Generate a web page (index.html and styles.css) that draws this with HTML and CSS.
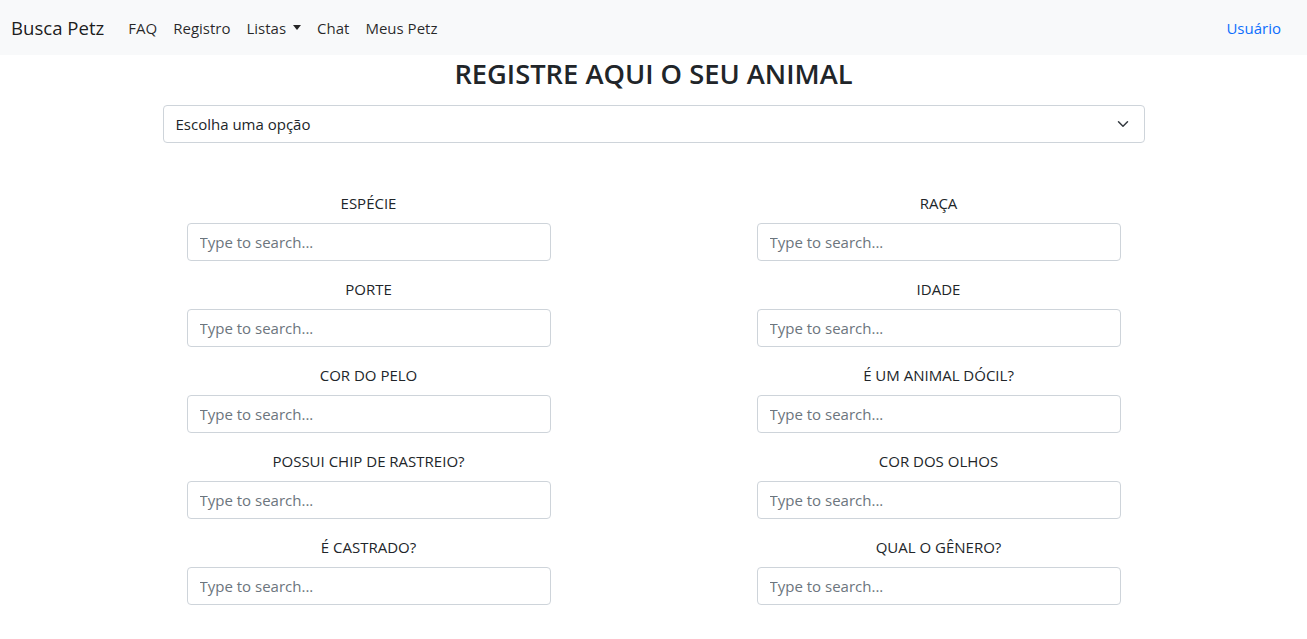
FILE: index.html
```html
<!DOCTYPE html>
<html lang="pt-BR">
<head>
<meta charset="utf-8">
<title>Busca Petz</title>
<link rel="stylesheet" href="styles.css">
</head>
<body>
<nav class="navbar">
  <a class="brand" href="#">Busca Petz</a>
  <ul class="nav">
    <li><a class="nav-link" href="#">FAQ</a></li>
    <li><a class="nav-link" href="#">Registro</a></li>
    <li><a class="nav-link dropdown" href="#">Listas</a></li>
    <li><a class="nav-link" href="#">Chat</a></li>
    <li><a class="nav-link" href="#">Meus Petz</a></li>
  </ul>
  <a class="nav-link user" href="#">Usuário</a>
</nav>
<main class="main">
  <h2 class="title">REGISTRE AQUI O SEU ANIMAL</h2>
  <div class="select-wrap">
    <div class="select">
      <span>Escolha uma opção</span>
      <svg class="chev" width="16" height="12" viewBox="0 0 16 16"><path fill="none" stroke="#343a40" stroke-linecap="round" stroke-linejoin="round" stroke-width="2" d="m2 5 6 6 6-6"/></svg>
    </div>
  </div>
  <div class="form-grid">
    <div class="field"><label>ESPÉCIE</label><input class="input" placeholder="Type to search..."></div>
    <div class="field"><label>RAÇA</label><input class="input" placeholder="Type to search..."></div>
    <div class="field"><label>PORTE</label><input class="input" placeholder="Type to search..."></div>
    <div class="field"><label>IDADE</label><input class="input" placeholder="Type to search..."></div>
    <div class="field"><label>COR DO PELO</label><input class="input" placeholder="Type to search..."></div>
    <div class="field"><label>É UM ANIMAL DÓCIL?</label><input class="input" placeholder="Type to search..."></div>
    <div class="field"><label>POSSUI CHIP DE RASTREIO?</label><input class="input" placeholder="Type to search..."></div>
    <div class="field"><label>COR DOS OLHOS</label><input class="input" placeholder="Type to search..."></div>
    <div class="field"><label>É CASTRADO?</label><input class="input" placeholder="Type to search..."></div>
    <div class="field"><label>QUAL O GÊNERO?</label><input class="input" placeholder="Type to search..."></div>
  </div>
</main>
</body>
</html>
```

FILE: styles.css
```css
* { box-sizing: border-box; }
html, body { margin: 0; padding: 0; }
body {
  font-family: "Open Sans", "Noto Sans", sans-serif;
  font-size: 15px;
  line-height: 24px;
  color: #212529;
  background: #fff;
}
a { text-decoration: none; }

.navbar {
  display: flex;
  align-items: center;
  height: 55px;
  padding: 0 26px 0 11px;
  background: #f8f9fa;
}
.brand {
  font-size: 18.6px;
  color: rgba(0,0,0,.9);
  margin-right: 16px;
  line-height: 30px;
}
.nav {
  display: flex;
  list-style: none;
  margin: 0;
  padding: 0;
  flex: 1;
}
.nav-link {
  display: block;
  padding: 8px;
  color: rgba(0,0,0,.85);
  font-size: 15px;
}
.nav .nav-link { padding: 8px 8px 8px 8px; }
.dropdown::after {
  content: "";
  display: inline-block;
  margin-left: 7px;
  vertical-align: 4px;
  border-top: 5px solid;
  border-right: 4.5px solid transparent;
  border-left: 4.5px solid transparent;
}
.user { color: #0d6efd; padding-right: 0; }

.main { padding-bottom: 20px; }
.title {
  margin: 0 0 12px;
  text-align: center;
  font-size: 27.3px;
  font-weight: 600;
  line-height: 38px;
}
.select-wrap {
  width: 982px;
  margin: 0 auto;
}
.select {
  display: flex;
  align-items: center;
  justify-content: space-between;
  height: 38px;
  padding: 0 12px;
  border: 1px solid #ced4da;
  border-radius: 4px;
}
.chev { margin-right: 1px; }

.form-grid {
  width: 1140px;
  margin: 48px auto 0;
  display: grid;
  grid-template-columns: 1fr 1fr;
}
.field {
  display: flex;
  flex-direction: column;
  align-items: center;
  padding-bottom: 16px;
}
.field label {
  line-height: 24px;
  margin-bottom: 8px;
  text-align: center;
}
.input {
  width: 364px;
  height: 38px;
  padding: 6px 12px;
  font: inherit;
  color: #212529;
  border: 1px solid #ced4da;
  border-radius: 4px;
  background: #fff;
}
.input::placeholder { color: #6c757d; }
```
